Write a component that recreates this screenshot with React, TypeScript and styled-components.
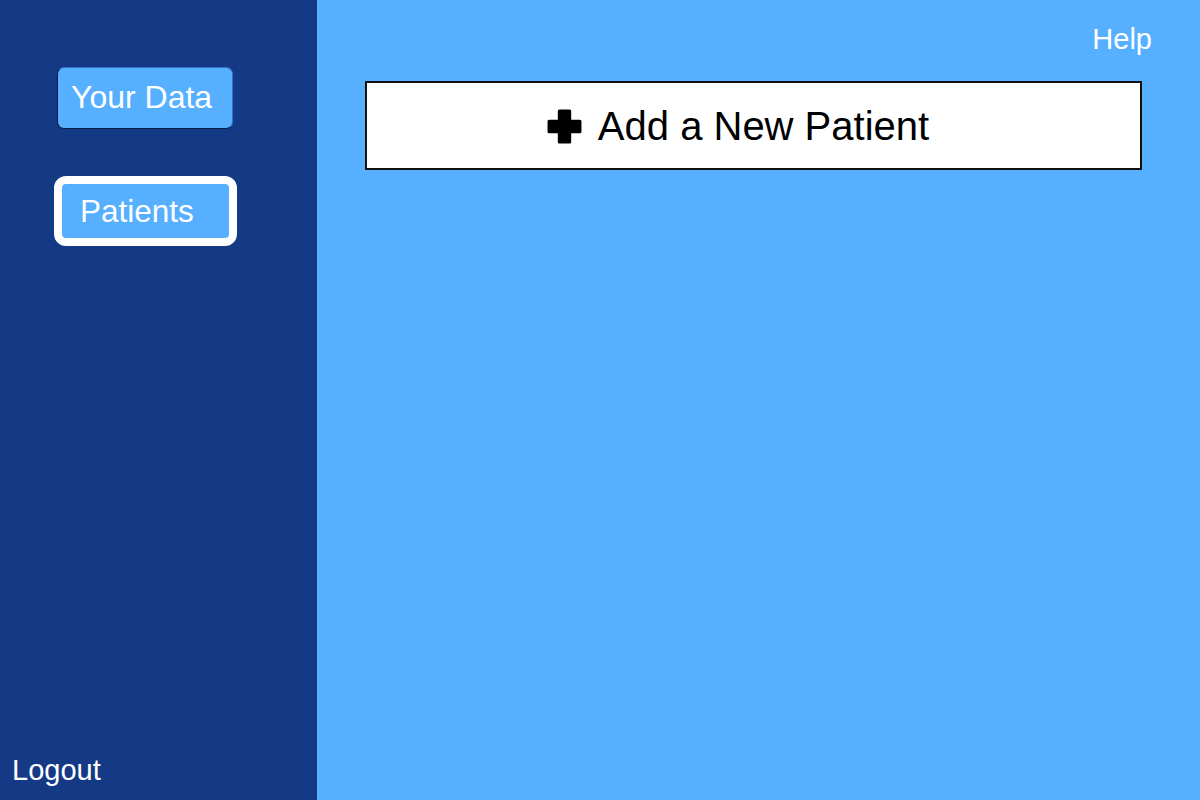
import React from "react";
import styled, { createGlobalStyle } from "styled-components";

const Global = createGlobalStyle`
  html, body { margin: 0; padding: 0; }
  body { font-family: "Liberation Sans", Arial, sans-serif; }
  * { box-sizing: border-box; }
`;

const Page = styled.div`
  display: flex;
  width: 1200px;
  height: 800px;
  overflow: hidden;
`;

const Sidebar = styled.nav`
  width: 317px;
  flex-shrink: 0;
  background: #143a86;
  display: flex;
  flex-direction: column;
  align-items: flex-start;
  padding: 67px 0 0 0;
`;

const NavButton = styled.button<{ $active?: boolean }>`
  font-family: "Liberation Sans", Arial, sans-serif;
  color: #ffffff;
  background: #56afff;
  text-align: left;
  cursor: pointer;
  ${(p) =>
    p.$active
      ? `
    margin: 47px 0 0 54px;
    width: 183px;
    height: 70px;
    border: 8px solid #ffffff;
    border-radius: 12px;
    font-size: 31.5px;
    padding: 0 0 0 18px;
  `
      : `
    margin: 0 0 0 57px;
    width: 176px;
    height: 62px;
    border: 1px solid #0a1e44;
    border-top-color: #3a70c0;
    border-right-color: #3a70c0;
    border-radius: 7px;
    font-size: 32px;
    padding: 0 0 2px 13px;
  `}
`;

const Logout = styled.button`
  margin-top: auto;
  margin-left: 12px;
  margin-bottom: 13px;
  background: none;
  border: none;
  padding: 0;
  color: #ffffff;
  font-family: "Liberation Sans", Arial, sans-serif;
  font-size: 29px;
  cursor: pointer;
`;

const Main = styled.main`
  flex: 1;
  background: #56afff;
  display: flex;
  flex-direction: column;
  padding: 0 58px 0 48px;
`;

const TopBar = styled.div`
  display: flex;
  justify-content: flex-end;
  height: 81px;
  padding-top: 21px;
`;

const Help = styled.button`
  background: none;
  border: none;
  padding: 0;
  margin-right: -10px;
  height: 36px;
  color: #ffffff;
  font-family: "Liberation Sans", Arial, sans-serif;
  font-size: 29px;
  cursor: pointer;
`;

const AddButton = styled.button`
  width: 777px;
  height: 89px;
  background: #ffffff;
  border: 2px solid #111111;
  display: flex;
  align-items: center;
  justify-content: center;
  gap: 15px;
  padding: 2px 32px 0 0;
  font-family: "Liberation Sans", Arial, sans-serif;
  font-size: 40px;
  color: #000000;
  cursor: pointer;
`;

const PlusIcon = () => (
  <svg width="37" height="37" viewBox="0 0 36 36">
    <path
      d="M13 1.5 H23 Q24.5 1.5 24.5 3 V11.5 H33 Q34.5 11.5 34.5 13 V23 Q34.5 24.5 33 24.5 H24.5 V33 Q24.5 34.5 23 34.5 H13 Q11.5 34.5 11.5 33 V24.5 H3 Q1.5 24.5 1.5 23 V13 Q1.5 11.5 3 11.5 H11.5 V3 Q11.5 1.5 13 1.5 Z"
      fill="#000"
    />
  </svg>
);

export default function App() {
  return (
    <>
      <Global />
      <Page>
        <Sidebar>
          <NavButton>Your Data</NavButton>
          <NavButton $active>Patients</NavButton>
          <Logout>Logout</Logout>
        </Sidebar>
        <Main>
          <TopBar>
            <Help>Help</Help>
          </TopBar>
          <AddButton>
            <PlusIcon />
            <span>Add a New Patient</span>
          </AddButton>
        </Main>
      </Page>
    </>
  );
}
